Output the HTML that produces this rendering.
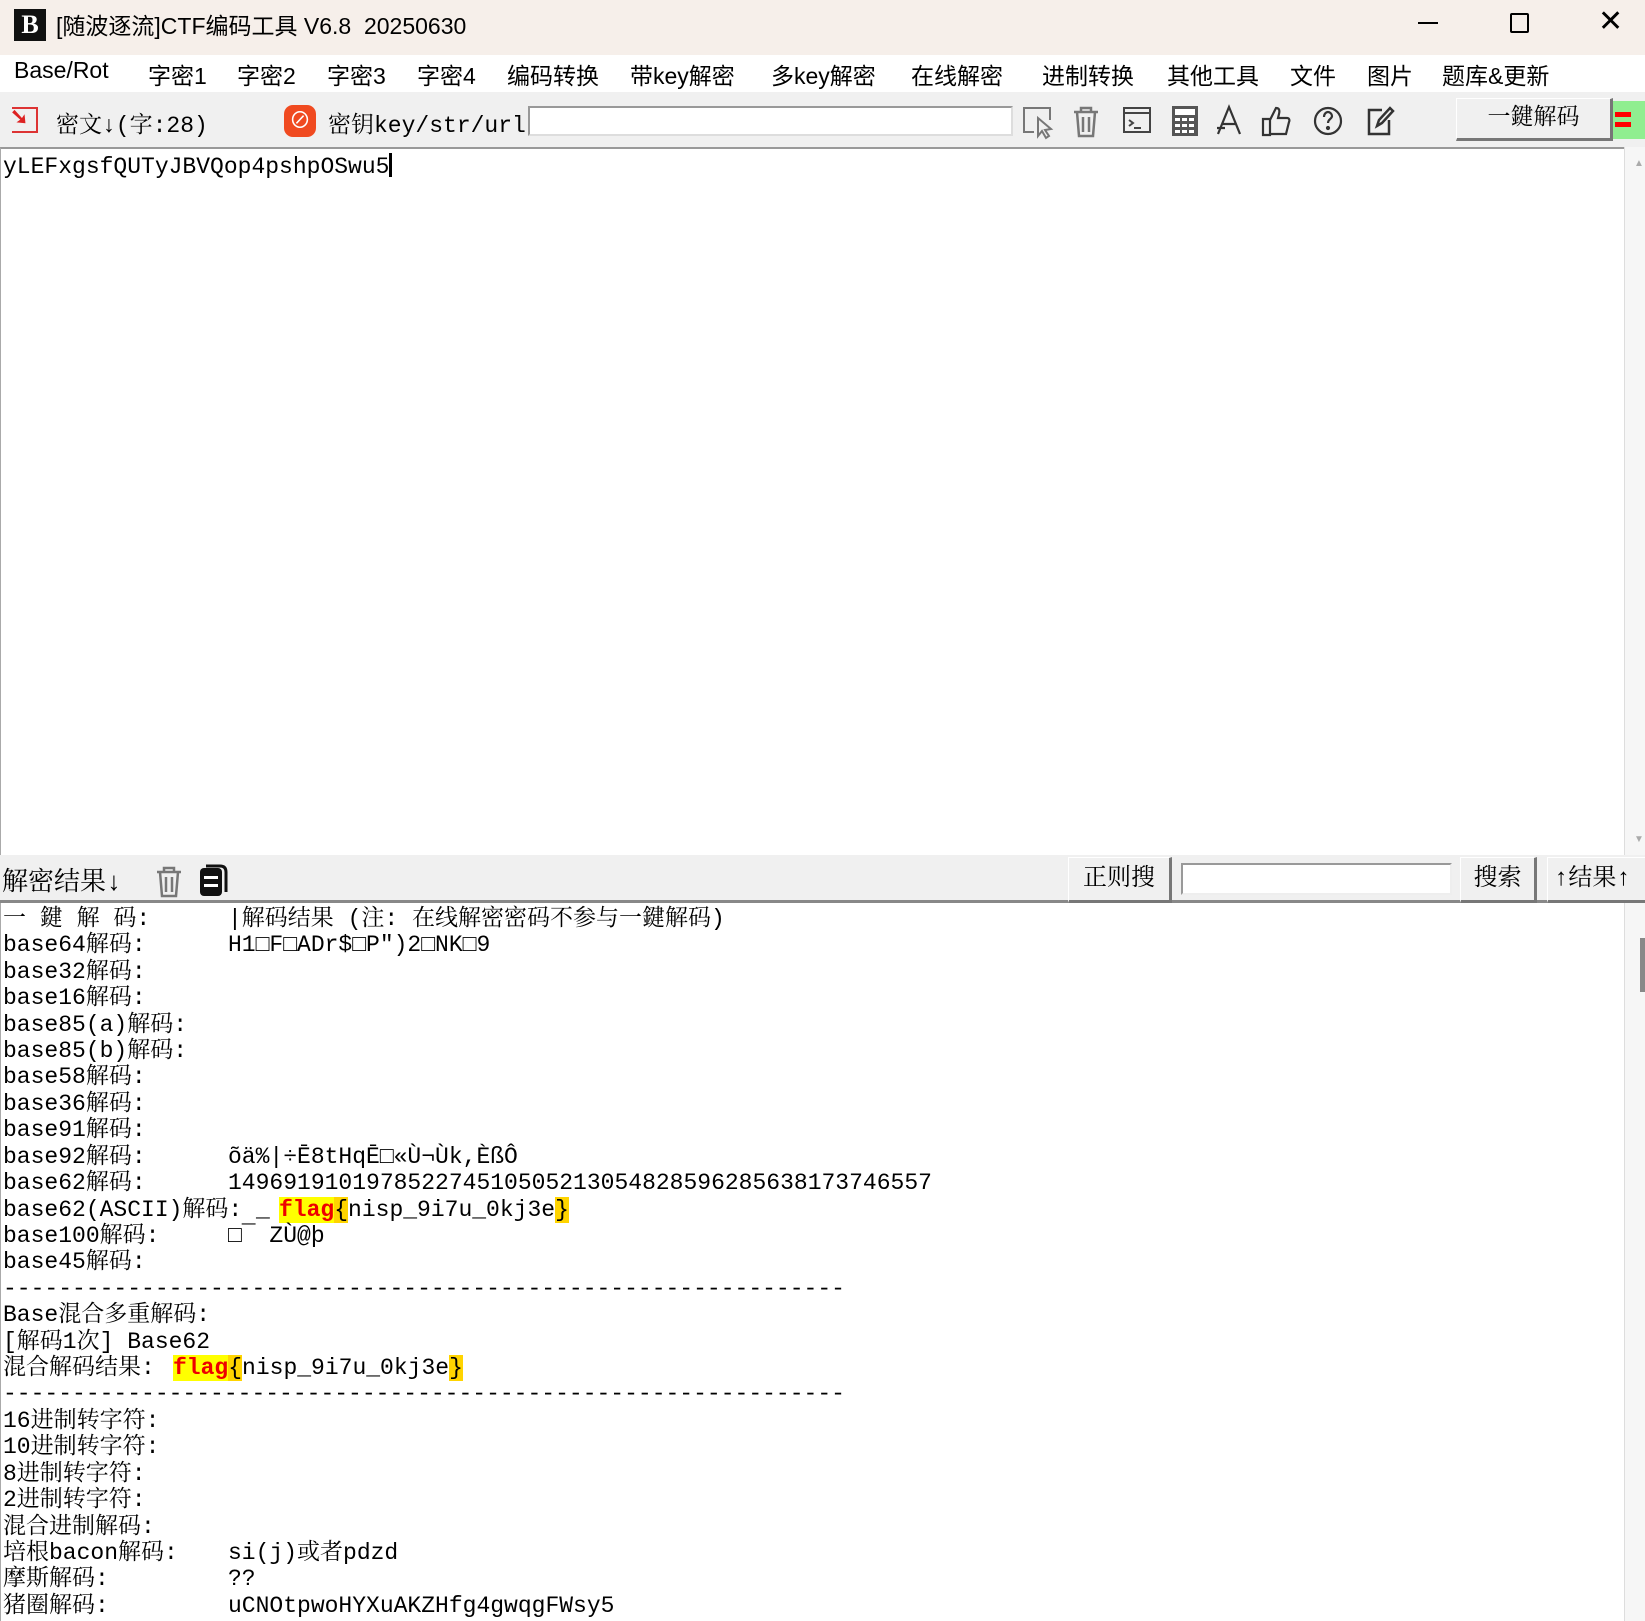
<!DOCTYPE html>
<html><head><meta charset="utf-8"><style>
*{margin:0;padding:0;box-sizing:border-box}
body{width:1645px;height:1621px;background:#fff;position:relative;overflow:hidden;font-family:"Liberation Sans","Noto Sans CJK SC",sans-serif;color:#000}
.a{position:absolute;white-space:pre}
.mono{font-family:"Liberation Mono","Noto Serif CJK SC",monospace;font-size:23px}
.menu span{position:absolute;top:57px;font-size:23px}
.btn{position:absolute;background:#f0f0f0;border:1px solid #fff;border-right:3px solid #777;border-bottom:3px solid #777;font-family:"Liberation Mono","Noto Serif CJK SC",monospace;font-size:23px;text-align:center}
.ln{position:absolute;left:3px;height:26px;line-height:26px;white-space:pre;font-family:"Liberation Mono","Noto Serif CJK SC",monospace;font-size:23px}
.v{position:absolute;left:225px;top:0}
.fl{background:#ffff00;color:#e00;font-weight:bold}
.br{background:#ffd400}
.ic{position:absolute;top:104px}
</style></head><body>
<div class="a" style="left:0;top:0;width:1645px;height:55px;background:#f6efea"></div>
<div class="a" style="left:14px;top:9px;width:32px;height:32px;background:#111;color:#fff;font:bold 26px 'Liberation Serif',serif;line-height:32px;text-align:center">B</div>
<div class="a" style="left:56px;top:7px;font-size:23px">[随波逐流]CTF编码工具 V6.8  20250630</div>
<div class="a" style="left:1418px;top:22px;width:20px;height:2px;background:#000"></div>
<div class="a" style="left:1510px;top:13px;width:19px;height:20px;border:2px solid #000;border-radius:2px"></div>
<div class="a" style="left:1598px;top:4px;font-size:30px;font-weight:300">✕</div>
<div class="menu">
<span style="left:14px">Base/Rot</span><span style="left:148px">字密1</span><span style="left:237px">字密2</span><span style="left:327px">字密3</span><span style="left:417px">字密4</span><span style="left:507px">编码转换</span><span style="left:630px">带key解密</span><span style="left:771px">多key解密</span><span style="left:911px">在线解密</span><span style="left:1042px">进制转换</span><span style="left:1167px">其他工具</span><span style="left:1290px">文件</span><span style="left:1367px">图片</span><span style="left:1442px">题库&amp;更新</span>
</div>
<div class="a" style="left:0;top:92px;width:1645px;height:55px;background:#f0f0f0"></div>
<div class="a" style="left:12px;top:107px;width:26px;height:26px;border:2px solid #d33;border-left:none;"></div>
<div class="a" style="left:10px;top:104px;color:#d22;font-size:22px;font-weight:bold">➘</div>
<div class="a mono" style="left:56px;top:106px">密文↓(字:28)</div>
<div class="a" style="left:284px;top:105px;width:32px;height:32px;border-radius:9px;background:#f04a20;color:#fff;text-align:center;font-size:22px;line-height:32px">⊘</div>
<div class="a mono" style="left:328px;top:106px">密钥key/str/url:</div>
<div class="a" style="left:528px;top:106px;width:485px;height:30px;background:#fff;border:2px solid #999;border-right-color:#ddd;border-bottom-color:#ddd"></div>
<svg class="ic" style="left:1020px" width="36" height="36" viewBox="0 0 36 36" fill="none" stroke="#777" stroke-width="2"><path d="M14 28H4V4h26v12"/><path d="M18 14l0 18 4-5 4 7 3-2-4-6 6-1z"/></svg>
<svg class="ic" style="left:1070px" width="32" height="36" viewBox="0 0 32 36" fill="none" stroke="#777" stroke-width="2.5"><path d="M4 8h24M11 8V4h10v4M7 8l2 24h14l2-24M13 13v15M19 13v15"/></svg>
<svg class="ic" style="left:1121px" width="32" height="32" viewBox="0 0 32 32" fill="none" stroke="#444" stroke-width="2"><rect x="3" y="4" width="26" height="24"/><path d="M3 9h26M8 16l4 3-4 3M13 24h7"/></svg>
<svg class="ic" style="left:1169px" width="32" height="34" viewBox="0 0 32 34"><rect x="3" y="2" width="26" height="30" fill="#555"/><rect x="6" y="5" width="20" height="6" fill="#fff"/><g fill="#fff"><rect x="6" y="14" width="5" height="3"/><rect x="13" y="14" width="5" height="3"/><rect x="20" y="14" width="5" height="3"/><rect x="6" y="20" width="5" height="3"/><rect x="13" y="20" width="5" height="3"/><rect x="20" y="20" width="5" height="3"/><rect x="6" y="26" width="5" height="3"/><rect x="13" y="26" width="5" height="3"/><rect x="20" y="26" width="5" height="3"/></g></svg>
<svg class="ic" style="left:1214px" width="30" height="34" viewBox="0 0 30 34" fill="none" stroke="#333" stroke-width="2.2"><path d="M4 30L15 3l11 27M8 20h14M3 24h8"/></svg>
<svg class="ic" style="left:1259px" width="34" height="34" viewBox="0 0 34 34" fill="none" stroke="#333" stroke-width="2.2"><path d="M4 15h7v16H4zM11 16l6-12c3 0 4 2 3 6l-1 4h9c2 0 3 2 2 4l-3 12H11"/></svg>
<svg class="ic" style="left:1311px" width="34" height="34" viewBox="0 0 34 34" fill="none" stroke="#333" stroke-width="2.2"><circle cx="17" cy="17" r="13"/><path d="M13 13c0-3 2-5 4-5s4 2 4 4c0 3-4 3-4 7"/><circle cx="17" cy="24" r="1" fill="#333"/></svg>
<svg class="ic" style="left:1364px" width="32" height="34" viewBox="0 0 32 34" fill="none" stroke="#333" stroke-width="2.5"><path d="M18 6H5v24h20V16"/><path d="M13 22l2-6 11-12 3 3-11 12z"/></svg>
<div class="btn" style="left:1456px;top:98px;width:157px;height:43px;line-height:38px">一鍵解码</div>
<div class="a" style="left:1613px;top:101px;width:32px;height:38px;background:#90ee90"></div>
<div class="a" style="left:1615px;top:112px;width:16px;height:5px;background:#f00"></div>
<div class="a" style="left:1615px;top:122px;width:16px;height:5px;background:#f00"></div>
<div class="a" style="left:0;top:147px;width:1624px;height:708px;border-top:2px solid #999;border-left:1px solid #aaa;background:#fff"></div>
<div class="a mono" style="left:3px;top:153px">yLEFxgsfQUTyJBVQop4pshpOSwu5<span style="display:inline-block;width:3px;height:24px;background:#000;vertical-align:-4px"></span></div>
<div class="a" style="left:1624px;top:147px;width:21px;height:708px;background:#f6f6f6;border-left:1px solid #ddd"></div>
<div class="a" style="left:1634px;top:158px;color:#aaa;font-size:10px">▲</div>
<div class="a" style="left:1634px;top:834px;color:#aaa;font-size:10px">▼</div>
<div class="a" style="left:0;top:855px;width:1645px;height:48px;background:#f0f0f0;border-bottom:3px solid #888"></div>
<div class="a mono" style="left:2px;top:861px;font-size:26px">解密结果↓</div>
<svg class="a" style="left:153px;top:864px" width="32" height="34" viewBox="0 0 32 34" fill="none" stroke="#777" stroke-width="2.5"><path d="M4 8h24M11 8V4h10v4M7 8l2 24h14l2-24M13 13v15M19 13v15"/></svg>
<svg class="a" style="left:198px;top:863px" width="30" height="34" viewBox="0 0 30 34"><rect x="2" y="5" width="22" height="28" rx="4" fill="#111"/><path d="M8 3h14c4 0 6 2 6 6v20" fill="none" stroke="#111" stroke-width="3"/><rect x="6" y="13" width="14" height="3" fill="#fff"/><rect x="6" y="21" width="14" height="3" fill="#fff"/></svg>
<div class="btn" style="left:1068px;top:857px;width:104px;height:46px;line-height:44px;font-size:24px">正则搜</div>
<div class="a" style="left:1181px;top:863px;width:271px;height:32px;background:#fff;border:2px solid #999;border-right-color:#eee;border-bottom-color:#eee"></div>
<div class="btn" style="left:1460px;top:857px;width:77px;height:46px;line-height:44px;font-size:24px">搜索</div>
<div class="btn" style="left:1547px;top:857px;width:110px;height:46px;line-height:44px;font-size:24px;text-align:left;padding-left:6px">↑结果↑</div>
<div class="a" style="left:0;top:903px;width:1624px;height:718px;background:#fff;border-left:1px solid #aaa"></div>
<div class="a" style="left:1624px;top:903px;width:21px;height:718px;background:#f6f6f6;border-left:1px solid #ddd"></div>
<div class="a" style="left:1640px;top:938px;width:5px;height:54px;background:#888"></div>
<div class="ln" style="top:906px">一 鍵 解 码:<span class="v">|解码结果 (注: 在线解密密码不参与一鍵解码)</span></div>
<div class="ln" style="top:932px">base64解码:<span class="v">H1□F□ADr$□P")2□NK□9</span></div>
<div class="ln" style="top:959px">base32解码:</div>
<div class="ln" style="top:985px">base16解码:</div>
<div class="ln" style="top:1012px">base85(a)解码:</div>
<div class="ln" style="top:1038px">base85(b)解码:</div>
<div class="ln" style="top:1064px">base58解码:</div>
<div class="ln" style="top:1091px">base36解码:</div>
<div class="ln" style="top:1117px">base91解码:</div>
<div class="ln" style="top:1144px">base92解码:<span class="v">õä%|÷Ē8tHqĒ□«Ù¬Ùk,ÈßÔ</span></div>
<div class="ln" style="top:1170px">base62解码:<span class="v">1496919101978522745105052130548285962856381737465‌57</span></div>
<div class="ln" style="top:1197px">base62(ASCII)解码: _<span class="fl" style="position:absolute;left:276px">flag<span class="br" style="color:#000;font-weight:normal">{</span><span style="background:#fff;color:#000;font-weight:normal">nisp_9i7u_0kj3e</span><span class="br" style="color:#000;font-weight:normal">}</span></span></div>
<div class="ln" style="top:1223px">base100解码:<span class="v">□¯ ZÙ@þ</span></div>
<div class="ln" style="top:1249px">base45解码:</div>
<div class="ln" style="top:1276px">-------------------------------------------------------------</div>
<div class="ln" style="top:1302px">Base混合多重解码:</div>
<div class="ln" style="top:1329px">[解码1次] Base62</div>
<div class="ln" style="top:1355px">混合解码结果:<span class="fl" style="position:absolute;left:170px">flag<span class="br" style="color:#000;font-weight:normal">{</span><span style="background:#fff;color:#000;font-weight:normal">nisp_9i7u_0kj3e</span><span class="br" style="color:#000;font-weight:normal">}</span></span></div>
<div class="ln" style="top:1381px">-------------------------------------------------------------</div>
<div class="ln" style="top:1408px">16进制转字符:</div>
<div class="ln" style="top:1434px">10进制转字符:</div>
<div class="ln" style="top:1461px">8进制转字符:</div>
<div class="ln" style="top:1487px">2进制转字符:</div>
<div class="ln" style="top:1514px">混合进制解码:</div>
<div class="ln" style="top:1540px">培根bacon解码:<span class="v">si(j)或者pdzd</span></div>
<div class="ln" style="top:1566px">摩斯解码:<span class="v">??</span></div>
<div class="ln" style="top:1593px">猪圈解码:<span class="v">uCNOtpwoHYXuAKZHfg4gwqgFWsy5</span></div>
</body></html>
